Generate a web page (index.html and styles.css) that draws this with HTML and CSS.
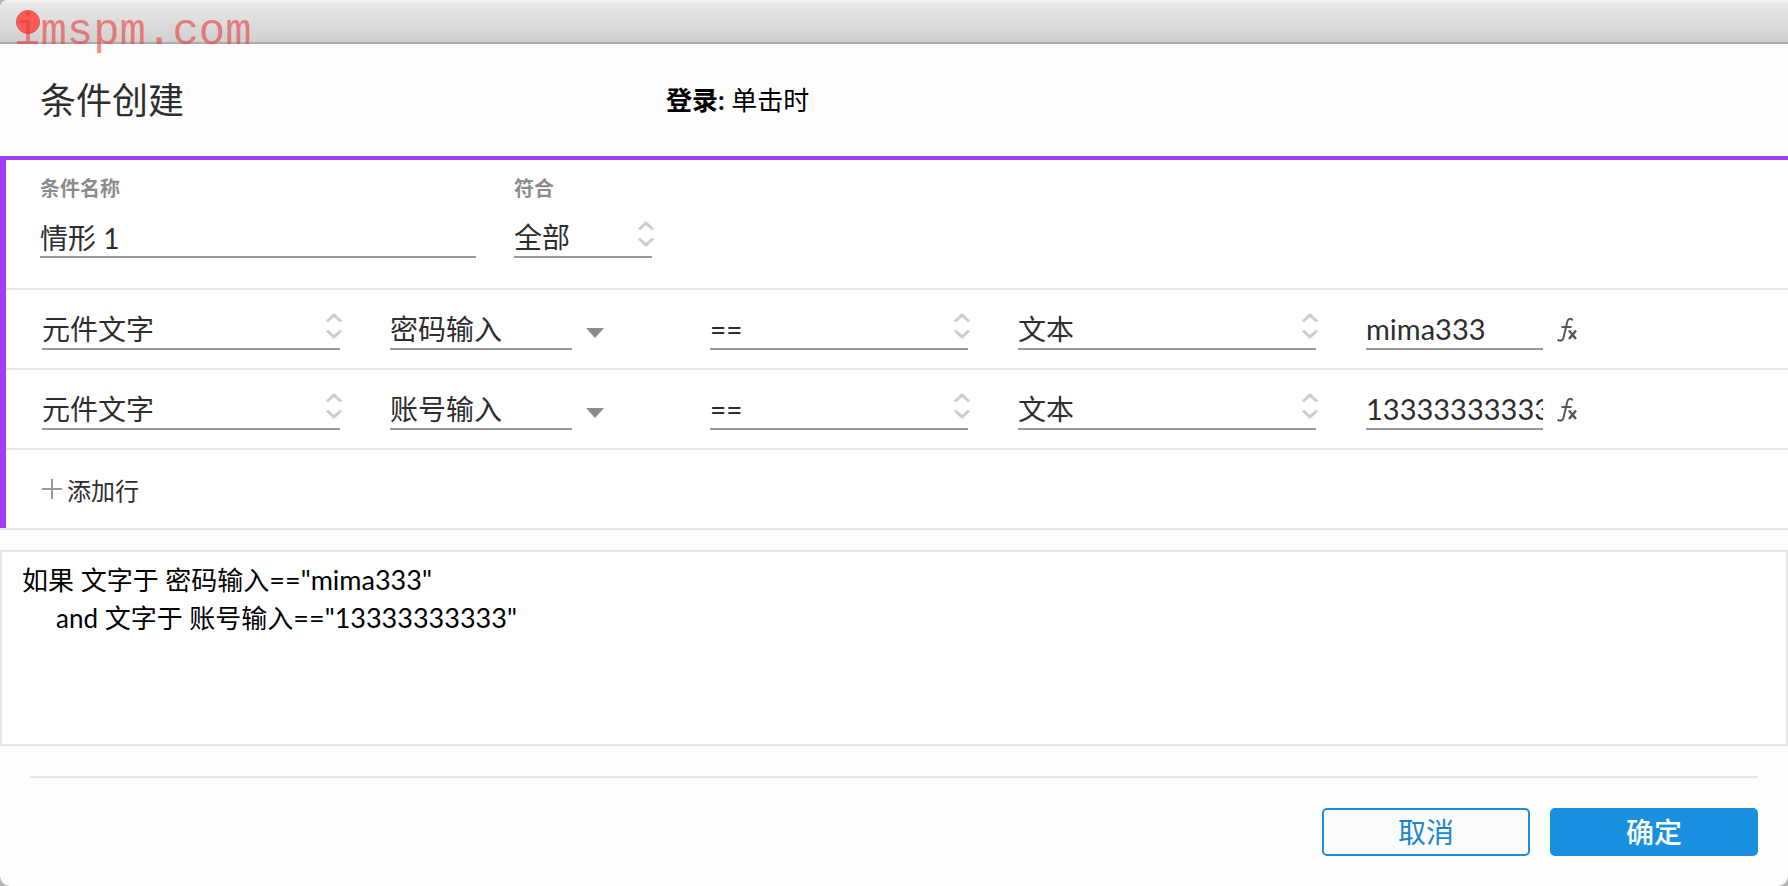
FILE: index.html
```html
<!DOCTYPE html>
<html lang="zh-CN">
<head>
<meta charset="utf-8">
<title>条件创建</title>
<link rel="stylesheet" href="styles.css">
</head>
<body>
<svg class="defs" aria-hidden="true">
  <symbol id="updown" viewBox="0 0 16 26"><path d="M1 8.500 8 2l7 6.500M1 17.500 8 24l7-6.500" fill="none" stroke="#cdcdcd" stroke-width="3"/></symbol>
  <symbol id="caret" viewBox="0 0 18 10"><path d="M0 0h18L9 10z" fill="#8c8c8c"/></symbol>
  <symbol id="fx" viewBox="0 0 22 26"><path d="M16.500 3.500C15.800 1.300 12.200.9 11.300 4.500L7.600 20.500C7 23.600 3.800 24.700 1.500 22.500M5.500 10h10" fill="none" stroke="#555" stroke-width="1.900"/><path d="m13 13.500 7 8.500M20 13.500 13 22" fill="none" stroke="#555" stroke-width="2.300"/></symbol>
</svg>
<main class="window">
  <div class="titlebar">
    <button class="close" type="button" aria-label="关闭"></button>
    <span class="watermark">imspm.com</span>
  </div>
  <header class="header">
    <h1 class="title">条件创建</h1>
    <p class="event"><strong>登录:</strong> 单击时</p>
  </header>
  <form class="builder">
    <div class="summary">
      <div class="field name-field">
        <label class="label" for="name">条件名称</label>
        <input class="control" id="name" type="text" value="情形 1">
      </div>
      <div class="field match-field">
        <label class="label" for="match">符合</label>
        <div class="select"><select class="control" id="match"><option>全部</option></select><svg class="updown"><use href="#updown"/></svg></div>
      </div>
    </div>
    <div class="row">
      <div class="select"><select class="control" aria-label="条件类型"><option>元件文字</option></select><svg class="updown"><use href="#updown"/></svg></div>
      <div class="combo"><select class="control" aria-label="元件"><option>密码输入</option></select><svg class="caret"><use href="#caret"/></svg></div>
      <div class="select"><select class="control" aria-label="比较"><option>==</option></select><svg class="updown"><use href="#updown"/></svg></div>
      <div class="select"><select class="control" aria-label="值类型"><option>文本</option></select><svg class="updown"><use href="#updown"/></svg></div>
      <div class="value"><input class="control" type="text" aria-label="值" value="mima333"><button class="fx" type="button" aria-label="函数"><svg><use href="#fx"/></svg></button></div>
    </div>
    <div class="row">
      <div class="select"><select class="control" aria-label="条件类型"><option>元件文字</option></select><svg class="updown"><use href="#updown"/></svg></div>
      <div class="combo"><select class="control" aria-label="元件"><option>账号输入</option></select><svg class="caret"><use href="#caret"/></svg></div>
      <div class="select"><select class="control" aria-label="比较"><option>==</option></select><svg class="updown"><use href="#updown"/></svg></div>
      <div class="select"><select class="control" aria-label="值类型"><option>文本</option></select><svg class="updown"><use href="#updown"/></svg></div>
      <div class="value"><input class="control" type="text" aria-label="值" value="13333333333"><button class="fx" type="button" aria-label="函数"><svg><use href="#fx"/></svg></button></div>
    </div>
    <div class="add-row">
      <button class="add" type="button"><svg class="plus" viewBox="0 0 20 20"><path d="M0 10h20M10 0v20" stroke="#999" stroke-width="2"/></svg>添加行</button>
    </div>
  </form>
  <section class="description">
    <p>如果 文字于 密码输入<span class="literal">=="mima333"</span></p>
    <p class="nested">and 文字于 账号输入<span class="literal">=="13333333333"</span></p>
  </section>
  <footer class="footer">
    <button class="button" type="button">取消</button>
    <button class="button primary" type="submit">确定</button>
  </footer>
</main>
</body>
</html>
```
FILE: styles.css
```css
* { box-sizing: border-box; }
html { background: #b4b4b4; }
body {
  margin: 0;
  color: #2e2e2e;
  font-family: Lato, "Noto Sans CJK SC", sans-serif;
  font-size: 28px;
}
h1, p { margin: 0; }
button, input, select { font: inherit; color: inherit; }
.defs { display: none; }

.window {
  display: flex;
  flex-direction: column;
  min-height: 100vh;
  background: #fefefe;
  border-radius: 8px 0 10px 10px;
}
.titlebar {
  position: relative;
  height: 44px;
  background: linear-gradient(#f4f4f4, #e8e8e8 3px, #d0d0d0);
  border-bottom: 2px solid #adadad;
  border-radius: 8px 0 0 0;
}
.close {
  position: absolute;
  top: 10px;
  left: 16px;
  width: 24px;
  height: 24px;
  padding: 0;
  background: #fc5b57;
  border: 1px solid #e2504c;
  border-radius: 50%;
}
.watermark {
  position: absolute;
  top: 7px;
  left: 14px;
  color: rgba(235, 60, 60, .6);
  font-family: "Liberation Mono", monospace;
  font-size: 44px;
  line-height: 50px;
}

.header {
  display: grid;
  grid-template-columns: 626fr 1092fr;
  align-items: center;
  height: 112px;
  padding: 0 30px 4px 40px;
}
.title { font-size: 36px; font-weight: 400; }
.event { color: #000; font-size: 26px; }

.builder {
  background: #fff;
  border-top: 4px solid #9b41f0;
  position: relative;
}
.builder > div {
  border-bottom: 2px solid #e6e6e6;
}
.builder::before {
  content: "";
  position: absolute;
  top: 0;
  bottom: 2px;
  left: 0;
  width: 6px;
  background: #9f3ff5;
}
.summary {
  display: flex;
  gap: 38px;
  padding: 16px 40px 30px;
}
.field { display: grid; gap: 18px; }
.name-field { flex: 0 1 436px; }
.match-field { flex: 0 0 138px; }
.label {
  color: #8c8c8c;
  font-size: 20px;
  font-weight: 700;
  line-height: 24px;
}
.control {
  appearance: none;
  display: block;
  width: 100%;
  min-width: 0;
  height: 40px;
  padding: 0;
  background: transparent;
  border: 0;
  border-bottom: 2px solid #999;
  border-radius: 0;
  outline: 0;
}
.select { position: relative; }
.updown {
  position: absolute;
  top: 3px;
  right: -2px;
  width: 16px;
  height: 26px;
  pointer-events: none;
}
.row {
  display: grid;
  grid-template-columns: 298fr 270fr 258fr 298fr 212fr 130fr;
  gap: 50px;
  padding: 20px 30px 18px 42px;
}
.combo { display: flex; align-items: center; gap: 14px; padding-right: 56px; }
.caret { flex: none; width: 18px; height: 10px; margin-top: 6px; }
.value { display: flex; align-items: center; gap: 13px; }
.value .control { padding-bottom: 2px; font-size: 29px; }
.fx {
  flex: none;
  height: 26px;
  padding: 0;
  background: none;
  border: 0;
}
.fx svg { display: block; width: 22px; height: 26px; }
.add-row { padding: 20px 42px 18px; }
.add {
  display: flex;
  align-items: center;
  gap: 5px;
  height: 38px;
  margin-bottom: 2px;
  padding: 0;
  background: none;
  border: 0;
  font-size: 24px;
}
.plus { width: 20px; height: 20px; }

.description {
  flex: 1 0 auto;
  margin-top: 20px;
  padding: 9px 20px;
  background: #fff;
  border: 2px solid #e6e6e6;
  color: #000;
  font-size: 26px;
  line-height: 38px;
}
.nested { padding-left: 34px; }
.literal { font-size: 27px; }

.footer {
  display: flex;
  justify-content: flex-end;
  gap: 20px;
  margin: 30px 30px 0;
  padding: 30px 0;
  border-top: 2px solid #e6e6e6;
}
.button {
  width: 208px;
  height: 48px;
  padding: 0;
  background: #fcfcfc;
  border: 2px solid #1a8fdf;
  border-radius: 5px;
  color: #1a86d2;
  line-height: 40px;
}
.primary { background: #1890df; color: #fff; font-weight: 500; }
```
